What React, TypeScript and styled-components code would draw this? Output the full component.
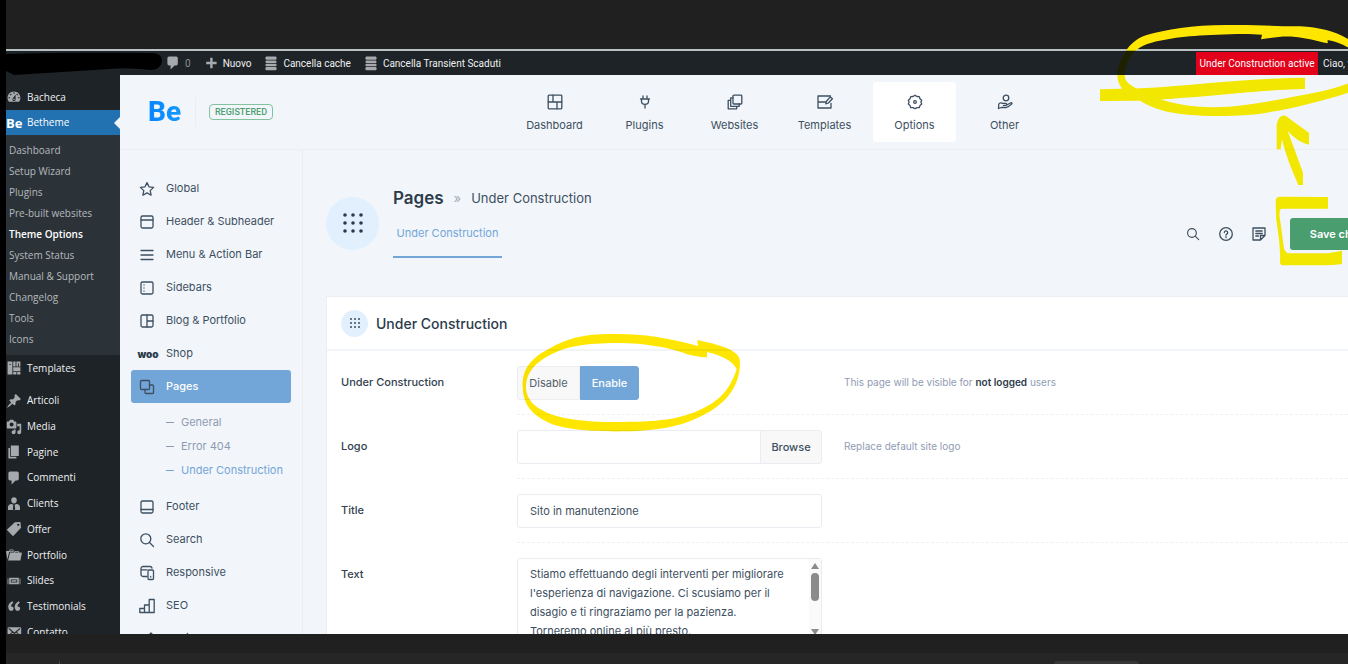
import React from "react";
import styled, { createGlobalStyle } from "styled-components";

const GlobalStyle = createGlobalStyle`
  *, *::before, *::after { box-sizing: border-box; }
  html, body { margin: 0; height: 100%; background: #202020; }
  #root { height: 100%; }
  a { color: inherit; text-decoration: none; }
  h1, h2, p, ul { margin: 0; padding: 0; font-weight: inherit; font-size: inherit; }
  ul { list-style: none; }
`;

const wpFont = `"Open Sans", "Noto Sans", sans-serif`;
const barFont = `Roboto, "Open Sans", sans-serif`;
const themeFont = `Inter, "Open Sans", sans-serif`;
const ink = "#3d4f61";
const accent = "#72a5d8";

/* ---------- page frame ---------- */

const Screen = styled.div`
  position: relative;
  display: flex;
  flex-direction: column;
  height: 100vh;
  overflow: hidden;
  border-left: 6px solid #000;
  background: #202020;
`;

const TopStrip = styled.div`
  flex: 0 0 51px;
  border-bottom: 2px solid #b7c0c2;
`;

const BottomStrip = styled.div`
  flex: 0 0 30px;
  display: flex;
  flex-direction: column;
  justify-content: flex-end;
`;

const TaskStrip = styled.div`
  height: 11px;
  display: flex;
  align-items: flex-end;
  padding: 0 209px 0 53px;
  background: #262626;
`;

const TaskDivider = styled.span`
  width: 1px;
  height: 3px;
  background: #444;
`;

const TaskTab = styled.span`
  width: 85px;
  height: 3px;
  margin-left: auto;
  border-radius: 3px 3px 0 0;
  background: #363636;
`;

/* ---------- admin bar ---------- */

const AdminBar = styled.header`
  flex: 0 0 24px;
  display: flex;
  align-items: center;
  background: #1d2327;
  border-bottom: 1px solid #45494c;
  color: #f0f0f1;
  font: 10px/23px ${barFont};
  white-space: nowrap;
`;

const SiteName = styled.svg`
  flex: none;
  width: 158px;
  height: 24px;
  margin-right: 1px;
`;

const BarLink = styled.a<{ $muted?: boolean }>`
  display: flex;
  align-items: center;
  gap: 4px;
  margin-right: 12px;
  color: ${(p) => (p.$muted ? "#8c8f94" : "#f0f0f1")};
`;

const StatusFlag = styled.a`
  margin-left: auto;
  width: 122px;
  text-align: center;
  background: #e2001a;
  color: #fff;
`;

const Greeting = styled.span`
  width: 30px;
  padding-left: 5px;
  overflow: hidden;
`;

/* ---------- WordPress menu ---------- */

const Body = styled.div`
  flex: 1;
  min-height: 0;
  display: flex;
  overflow: hidden;
  margin-top: -1px;
`;

const AdminMenu = styled.nav`
  flex: 0 0 114px;
  padding-top: 9px;
  background: #1d2327;
  color: #f0f0f1;
  font: 10px/15px ${wpFont};
  white-space: nowrap;
`;

const MenuLink = styled.a<{ $active?: boolean }>`
  position: relative;
  display: flex;
  align-items: center;
  gap: 5px;
  height: ${(p) => (p.$active ? "25px" : "26px")};
  background: ${(p) => (p.$active ? "#2271b1" : "transparent")};
  color: ${(p) => (p.$active ? "#fff" : "#f0f0f1")};
`;

const MenuArrow = styled.span`
  position: absolute;
  right: 0;
  top: 7px;
  border: 6px solid transparent;
  border-left-width: 0;
  border-right-color: #f2f6fa;
`;

const MiniLogo = styled.span`
  width: 16px;
  font: 700 13px/16px ${wpFont};
  color: #fff;
`;

const SubMenu = styled.ul`
  padding: 5px 0 5px 3px;
  background: #2c3338;
`;

const SubMenuItem = styled.li<{ $active?: boolean }>`
  line-height: 21px;
  color: ${(p) => (p.$active ? "#fff" : "#b4b9be")};
  font-weight: ${(p) => (p.$active ? 600 : 400)};
`;

const MenuGroup = styled.div`
  margin-top: 7px;
  height: 257px;
  display: grid;
  grid-auto-rows: 1fr;

  ${MenuLink} { height: auto; }
`;

/* ---------- theme area ---------- */

const Theme = styled.div`
  flex: 1;
  min-width: 0;
  display: flex;
  flex-direction: column;
  background: #f2f6fa;
  color: ${ink};
  font: 11px/17px ${themeFont};
`;

const ThemeHeader = styled.header`
  flex: 0 0 75px;
  display: flex;
  align-items: center;
  border-bottom: 1px solid #ebeff4;
`;

const Brand = styled.div`
  flex: 0 0 393px;
  display: flex;
  align-items: center;
  padding-left: 28px;
`;

const Logo = styled.span`
  width: 48px;
  border-right: 1px solid #eaeef3;
  font: 800 28px/30px Roboto, sans-serif;
  background: linear-gradient(90deg, #0a84ff, #18a4fb);
  background-clip: text;
  -webkit-background-clip: text;
  color: transparent;
`;

const Badge = styled.span`
  margin-left: 13px;
  width: 64px;
  border: 1px solid #83c29f;
  border-radius: 4px;
  text-align: center;
  color: #4d9f70;
  font: 500 9px/14px Roboto, sans-serif;
`;

const TopNav = styled.nav`
  display: flex;
  gap: 7px;
`;

const TopLink = styled.a<{ $active?: boolean }>`
  width: 83px;
  height: 60px;
  display: flex;
  flex-direction: column;
  align-items: center;
  justify-content: center;
  gap: 7px;
  padding-top: 3px;
  border-radius: 3px;
  background: ${(p) => (p.$active ? "#fff" : "transparent")};
`;

const ThemeBody = styled.div`
  flex: 1;
  min-height: 0;
  display: flex;
`;

const SideNav = styled.nav`
  flex: 0 0 183px;
  padding: 22px 11px 0;
  border-right: 1px solid #e9eef3;
  overflow: hidden;
`;

const SideLink = styled.a<{ $active?: boolean }>`
  display: flex;
  align-items: center;
  gap: 11px;
  height: 33px;
  padding-left: 8px;
  border-radius: 3px;
  background: ${(p) => (p.$active ? accent : "transparent")};
  font-weight: ${(p) => (p.$active ? 500 : 400)};

  span { color: ${(p) => (p.$active ? "#fff" : "inherit")}; }
`;

const SideSub = styled.ul`
  padding: 7px 0 8px 35px;
  line-height: 24px;
`;

const SideSubItem = styled.li<{ $active?: boolean }>`
  display: flex;
  align-items: center;
  gap: 7px;
  color: ${(p) => (p.$active ? accent : "#8f9bb3")};
  white-space: nowrap;

  &::before {
    content: "";
    width: 8px;
    height: 1px;
    background: currentColor;
  }
`;

const WooMark = styled.b`
  width: 24px;
  margin: 0 -5px 0 -3px;
  font: 900 10px/12px Inter, sans-serif;
  text-align: center;
  color: #2c3b4a;
`;

const Main = styled.main`
  flex: 1;
  min-width: 0;
  padding-left: 23px;
  overflow: hidden;
`;

const PageHead = styled.div`
  display: flex;
  align-items: center;
  height: 146px;
`;

const RoundIcon = styled.span<{ $size: number }>`
  flex: none;
  display: grid;
  place-items: center;
  width: ${(p) => p.$size}px;
  height: ${(p) => p.$size}px;
  border-radius: 50%;
  background: #e2f0fe;
  color: #2c3b4a;
`;

const HeadText = styled.div`
  display: flex;
  flex-direction: column;
  align-items: flex-start;
  gap: 16px;
  margin-left: 14px;
`;

const Crumbs = styled.div`
  display: flex;
  align-items: center;
  gap: 10px;
  font-size: 13px;
  line-height: 20px;

  h1 {
    font-size: 17px;
    font-weight: 600;
    color: #2c3b4a;
  }
  i {
    font-style: normal;
    color: #a3adb8;
  }
`;

const Tab = styled.a`
  width: 109px;
  padding-bottom: 14px;
  border-bottom: 2px solid ${accent};
  text-align: center;
  line-height: 18px;
  color: ${accent};
`;

const Tools = styled.div`
  display: flex;
  align-items: center;
  gap: 17px;
  margin: 21px -56px 0 auto;
`;

const IconButton = styled.button`
  display: grid;
  width: 16px;
  height: 16px;
  place-items: center;
  padding: 0;
  border: 0;
  background: none;
  color: ${ink};
`;

const SaveButton = styled.button`
  width: 114px;
  height: 32px;
  margin-left: 6px;
  padding: 0;
  border: 0;
  border-radius: 3px;
  background: #4a9d6e;
  color: #fff;
  font: 600 11px/16px ${themeFont};
`;

const Panel = styled.section`
  border: 1px solid #ebeff4;
  border-right: 0;
  background: #fff;
`;

const PanelHead = styled.h2`
  display: flex;
  align-items: center;
  gap: 8px;
  height: 54px;
  padding-left: 14px;
  border-bottom: 2px solid #f1f4f8;
  font-size: 14px;
  font-weight: 500;
  color: #2c3b4a;
`;

const FormRow = styled.div`
  display: flex;
  padding-left: 14px;
`;

const RowLabel = styled.label`
  flex: 0 0 176px;
  padding-top: 15px;
  line-height: 32px;
  font-weight: 500;
  color: #33424f;
`;

const RowContent = styled.div`
  flex: 1;
  display: flex;
  gap: 22px;
  padding: 15px 0 14px;
  border-bottom: 1px dashed #eef1f5;
`;

const Control = styled.div`
  position: relative;
  flex: 0 0 305px;
  display: flex;
  align-items: flex-start;
`;

const Hint = styled.p`
  font-size: 10px;
  line-height: 32px;
  color: #8f9bb3;

  b {
    font-weight: 600;
    color: #2c3b4a;
  }
`;

const SwitchButton = styled.button<{ $on?: boolean }>`
  height: 34px;
  width: ${(p) => (p.$on ? "59px" : "63px")};
  padding: 0;
  border: 1px solid ${(p) => (p.$on ? accent : "#ecedf1")};
  border-radius: ${(p) => (p.$on ? "0 3px 3px 0" : "3px 0 0 3px")};
  background: ${(p) => (p.$on ? accent : "#f8f8f9")};
  color: ${(p) => (p.$on ? "#fff" : "#55606c")};
  font: ${(p) => (p.$on ? 500 : 400)} 11px/16px ${themeFont};
`;

const TextInput = styled.input<{ $joined?: boolean }>`
  flex: 1;
  min-width: 0;
  height: 34px;
  padding: 0 12px;
  border: 1px solid #e9edf2;
  border-radius: ${(p) => (p.$joined ? "3px 0 0 3px" : "3px")};
  background: #fff;
  color: ${ink};
  font: 11px/16px ${themeFont};
`;

const BrowseButton = styled.button`
  width: 62px;
  height: 34px;
  margin-left: -1px;
  padding: 0;
  border: 1px solid #e9edf2;
  border-radius: 0 3px 3px 0;
  background: #f8f8f9;
  color: ${ink};
  font: 500 11px/16px ${themeFont};
`;

const TextArea = styled.textarea`
  flex: 1;
  min-width: 0;
  height: 82px;
  padding: 6px 24px 6px 12px;
  border: 1px solid #e9edf2;
  border-radius: 3px;
  resize: none;
  overflow-y: scroll;
  scrollbar-width: none;
  color: ${ink};
  font: 11px/19px ${themeFont};
`;

const ScrollBar = styled.svg`
  position: absolute;
  top: 1px;
  right: 1px;
  width: 12px;
  height: 80px;
`;

/* ---------- highlighter marks ---------- */

const Marks = styled.svg<{ $multiply?: boolean }>`
  position: absolute;
  inset: 0 auto auto -6px;
  pointer-events: none;
  mix-blend-mode: ${(p) => (p.$multiply ? "multiply" : "normal")};
`;

const ovalTop =
  "M810 121 C770 95 720 82 660 79 C600 80 540 74 450 75 C340 74 260 88 200 105 C160 118 140 145 128 170 C108 205 106 240 126 266 L180 302 C200 315 225 325 250 332 C320 352 480 352 560 338 C640 325 740 300 810 276 L810 248 C740 275 700 278 640 290 C560 306 480 322 400 322 C330 322 280 310 240 298 C200 285 165 265 145 250 C125 230 135 200 150 170 C165 150 185 135 215 128 C280 112 340 106 450 103 C490 101 520 102 546 104 L543 118 C570 114 600 108 640 110 C680 114 710 122 743 130 L743 120 C770 125 790 133 810 146 Z";
const underline =
  "M60 268 L60 303 L180 302 C380 292 520 270 675 267 L675 233 C480 236 330 258 180 265 Z";
const arrow =
  "M590 448 L590 375 Q595 344 617 347 Q640 365 687 398 L687 434 Q650 425 623 392 L669 518 L669 555 L655 555 C640 520 618 470 606 418 L602 448 Z";
const bracket =
  "M587 600 Q590 590 600 590 L744 591 L744 626 L604 626 Q597 628 599 650 L612 745 Q615 760 630 760 L745 760 L786 752 L786 792 Q760 796 730 796 L610 796 Q600 796 600 785 C602 730 592 690 588 650 Z";
const ovalSwitch =
  "M1290 215 C1290 180 1230 165 1162 150 L1164 168 C1060 140 990 130 900 132 C820 132 770 145 720 175 C660 205 636 240 638 290 C640 350 670 375 720 400 C780 425 900 426 980 423 C1060 420 1130 405 1190 370 C1260 330 1290 280 1290 215 Z M1280 238 C1262 290 1240 325 1180 355 C1110 390 1040 396 920 396 C820 396 740 385 700 362 C665 345 646 320 648 285 C650 245 680 215 720 195 C770 168 830 160 920 159 C1000 158 1070 172 1120 188 C1145 198 1165 200 1191 202 L1191 186 C1240 198 1270 215 1280 238 Z";

/* ---------- icons ---------- */

const dash: Record<string, string> = {
  dashboard:
    "M3.76 16h12.48c1.1-1.37 1.76-3.11 1.76-5 0-4.42-3.58-8-8-8s-8 3.58-8 8c0 1.89.66 3.63 1.76 5zM10 4c.55 0 1 .45 1 1s-.45 1-1 1-1-.45-1-1 .45-1 1-1zM6 6c.55 0 1 .45 1 1s-.45 1-1 1-1-.45-1-1 .45-1 1-1zm8 0c.55 0 1 .45 1 1s-.45 1-1 1-1-.45-1-1 .45-1 1-1zm-5.37 5.55L12 7v6c0 1.1-.9 2-2 2s-2-.9-2-2c0-.57.24-1.08.63-1.45zM4 10c.55 0 1 .45 1 1s-.45 1-1 1-1-.45-1-1 .45-1 1-1zm12 0c.55 0 1 .45 1 1s-.45 1-1 1-1-.45-1-1 .45-1 1-1zm-5 3c0-.55-.45-1-1-1s-1 .45-1 1 .45 1 1 1 1-.45 1-1z",
  templates: "M2 2h6v16H2zM9 2h3v6H9zM13 2h5v6h-2V4h-1v4h-2zM9 9h9v5h-9zM9 15h4v3H9zM14 15h4v3h-4zM4 5v1h2V5z",
  pin: "M10.44 3.02l1.82-1.82 6.36 6.35-1.83 1.82c-1.05-.68-2.48-.57-3.41.36l-.75.75c-.92.93-1.04 2.35-.35 3.41l-1.83 1.82-2.41-2.41-2.8 2.79c-.42.42-3.38 2.71-3.8 2.29s1.86-3.39 2.28-3.81l2.79-2.79L4.1 9.36l1.83-1.82c1.05.69 2.48.57 3.4-.36l.75-.75c.93-.92 1.05-2.35.36-3.41z",
  media:
    "M13 11V4c0-.55-.45-1-1-1h-1.67L9 1H5L3.67 3H2c-.55 0-1 .45-1 1v7c0 .55.45 1 1 1h10c.55 0 1-.45 1-1zM7 4.5c1.38 0 2.5 1.12 2.5 2.5S8.38 9.5 7 9.5 4.5 8.38 4.5 7 5.62 4.5 7 4.5zM14 6h5v10.5c0 1.38-1.12 2.5-2.5 2.5S14 17.88 14 16.5s1.12-2.5 2.5-2.5c.17 0 .34.02.5.05V9h-3V6zm-4 8.05V13h2v3.5c0 1.38-1.12 2.5-2.5 2.5S7 17.88 7 16.5 8.12 14 9.5 14c.17 0 .34.02.5.05z",
  page: "M6 15V2h10v13H6zm-1 1h8v2H3V5h2v11z",
  comment:
    "M5 2h9q.82 0 1.41.59T16 4v7q0 .82-.59 1.41T14 13h-2l-5 5v-5H5q-.82 0-1.41-.59T3 11V4q0-.82.59-1.41T5 2z",
  person:
    "M10 1.5c2.1 0 3.5 1.6 3.5 3.8S12.100 9.500 10 9.500 6.500 7.500 6.500 5.300 7.900 1.500 10 1.500zM7 10l2.200 1-.7 5.500L10 18l1.500-1.500-.7-5.500L13 10c2.800.4 4.500 1.500 4.500 4v3.500h-15V14c0-2.500 1.700-3.600 4.500-4z",
  tag: "M11 1.500L18 1.200 18.800 8.500 8.800 19 1 10.800zM15.300 3.300a1.400 1.400 0 1 0 .1 2.800 1.400 1.400 0 0 0-.1-2.800z",
  portfolio:
    "M4 5H.78c-.37 0-.74.32-.69.84l1.56 9.99S3.5 8.47 3.86 6.7c.11-.53.61-.7.98-.7H10s-.7-2.08-.77-2.31C9.11 3.25 8.89 3 8.45 3H5.14c-.36 0-.7.23-.8.64C4.25 4.04 4 5 4 5zm4.88 0h-4s.42-1 .87-1h2.13c.48 0 1 1 1 1zM2.67 16.25c-.31.47-.76.75-1.26.75h15.73c.54 0 .92-.31 1.03-.83.44-2.19 1.68-8.44 1.68-8.44.07-.5-.3-.73-.62-.73H16V5.53c0-.16-.26-.53-.66-.53h-3.76c-.52 0-.87.58-.87.58L10 7H5.59c-.32 0-.63.19-.69.5 0 0-1.59 6.7-1.72 7.33-.07.37-.22.99-.51 1.42zM15.38 7H11s.58-1 1.13-1h2.29c.71 0 .96 1 .96 1z",
  slides: "M2 7h1v7H2zM4 6h12v8H4zM17 7h1v7h-1zM6 8v4h8V8zM7 9h6v2H7z",
  quote:
    "M9.49 13.22c0-.74-.2-1.38-.61-1.9-.62-.78-1.83-.88-2.53-.72-.29-1.65 1.11-3.75 2.92-4.65L7.88 4c-2.73 1.3-5.42 4.28-4.96 8.05C3.21 14.43 4.59 16 6.54 16c.85 0 1.56-.25 2.12-.75s.83-1.18.83-2.03zm8.05 0c0-.74-.2-1.38-.61-1.9-.63-.78-1.83-.88-2.53-.72-.29-1.65 1.11-3.75 2.92-4.65L15.93 4c-2.73 1.3-5.41 4.28-4.95 8.05.29 2.38 1.66 3.95 3.61 3.95.85 0 1.56-.25 2.12-.75s.83-1.18.83-2.03z",
  mail: "M19 14.5v-9c0-.83-.67-1.5-1.5-1.5H3.49c-.83 0-1.5.67-1.5 1.5v9c0 .83.67 1.5 1.5 1.5H17.5c.83 0 1.5-.67 1.5-1.5zm-1.31-9.11c.33.33.15.67-.03.84L13.6 9.95l3.9 4.06c.12.14.2.36.06.51-.13.16-.43.15-.56.05l-4.37-3.73-2.14 1.95-2.13-1.95-4.37 3.73c-.13.1-.43.11-.56-.05-.14-.15-.06-.37.06-.51l3.9-4.06-4.06-3.72c-.18-.17-.36-.51-.03-.84s.67-.17.95.07l6.24 5.04 6.25-5.04c.28-.24.62-.4.95-.07z",
  plus: "M17 8.500v3h-5v5H9v-5H4v-3h5v-5h3v5z",
  stack:
    "M4 2h12l1 1v2l-1 1H4L3 5V3zM4 7h12l1 1v1l-1 1H4L3 9V8zM4 11h12l1 1v1l-1 1H4l-1-1v-1zM4 15h12l1 1v2l-1 1H4l-1-1v-2z",
};

const DashIcon = ({ name }: { name: string }) => (
  <svg width="16" height="16" viewBox="0 0 20 20" fill="#a7aaad" fillRule="evenodd" aria-hidden="true">
    <path d={dash[name]} />
  </svg>
);

const line: Record<string, React.ReactNode> = {
  star: <path d="M8 1.600l2 4.200 4.600.6-3.400 3.200.9 4.600L8 11.900l-4.100 2.300.9-4.600L1.400 6.400 6 5.800z" />,
  header: <><rect x="2" y="2" width="12" height="12" rx="1.500" /><path d="M2 6h12" /></>,
  menu: <path d="M2 3.500h12M2 8h12M2 12.500h12" />,
  sidebars: <><rect x="2" y="2" width="12" height="12" rx="1.500" /><path d="M5 5v.1M5 8v.1M5 11v.1" /></>,
  blog: <><rect x="2" y="2" width="12" height="12" rx="1.500" /><path d="M8 2v12M8 8h6" /></>,
  pages: <><rect x="1.500" y="1.500" width="9" height="9" rx="1" /><path d="M10.500 6H13.500a1 1 0 0 1 1 1v6.500a1 1 0 0 1-1 1H7a1 1 0 0 1-1-1V10.500" /></>,
  footer: <><rect x="2" y="2" width="12" height="12" rx="1.500" /><path d="M2 10.500h12" /></>,
  search: <><circle cx="6.800" cy="6.800" r="5" /><path d="M10.500 10.500l4 4" /></>,
  responsive: <><path d="M8 11.500H4a2 2 0 0 1-2-2V3.500a2 2 0 0 1 2-2h7a2 2 0 0 1 2 1.500M2 4.800h6" /><rect x="9" y="5" width="5.500" height="9.500" rx="1" /><path d="M11.700 11.500v.6" /></>,
  seo: <path d="M.8 14.500v-4h4.700v4zM5.500 14.500V7h4.700v7.500zM10.200 14.500V1.500h5v13zM.8 14.500h14.400" />,
  tool: <path d="M9 5l3-3 2 2-3 3zM9 5l-6 6v3h3l5-7" fill="currentColor" />,
  dashboardNav: <><rect x="1.200" y="1.200" width="13.600" height="13.600" rx=".8" /><path d="M1.200 8h13.600M6 1.200V8M10 8v6.800" /></>,
  plug: <path d="M6 2v2.500M10 2v2.500M3.500 5h9M4.500 5v2.500a3.500 2.800 0 0 0 7 0V5M8 10.300v3.700" />,
  websites: <><rect x="6" y="1.200" width="8.800" height="8.800" rx=".8" /><path d="M6 3.800H3.700v8.500h8.500V10M3.700 6.300H1.200v8.500h8.500v-2.500" /></>,
  templatesNav: <><path d="M14 9.500v4.500H1V2h12.500M1 8h7.500" /><path d="M8.800 9.800l.6-2.600 4-4.300 2 1.800-4 4.300z" /></>,
  options: <><path d="M8 1.200l1.900 1.300 2.400.1.700 2.200 1.700 1.400-.8 1.800.8 2-1.700 1.400-.8 2.300-2.300-.1L8 14.800l-1.900-1.200-2.300.1-.8-2.300L1.300 10l.8-2-.8-1.800L3 4.800l.7-2.200 2.400-.1z" /><circle cx="8" cy="8" r="1.300" /></>,
  other: <><circle cx="9" cy="4" r="2.800" /><path d="M1.500 14.500l.3-4.500c1-1.500 3-1.500 4-.6h3c1.300 0 1.300 2 0 2H6.500M9.800 11l4-2.200c1-.4 1.600.6.8 1.300-2 1.800-4 3.400-5.600 3.400H4.200l-2.700 1" /></>,
  help: <><circle cx="8" cy="8" r="6.300" /><path d="M6.300 6.500a1.700 1.700 0 1 1 2.400 1.600c-.5.3-.7.500-.7 1.100M8 10.700v1" /></>,
  note: <><path d="M14 9.500V2H2v12h7.500zM14 9.500H9.500V14M4.800 5h6.400M4.800 7.500h6.400M4.800 10h2.700" /></>,
};

const LineIcon = ({ name, size = 16 }: { name: string; size?: number }) => (
  <svg
    width={size}
    height={size}
    viewBox="0 0 16 16"
    fill="none"
    stroke="currentColor"
    strokeWidth="1.3"
    strokeLinecap="round"
    strokeLinejoin="round"
    aria-hidden="true"
  >
    {line[name]}
  </svg>
);

const Dots = ({ size }: { size: number }) => (
  <svg width={size} height={size} viewBox="0 0 20 20" fill="currentColor" aria-hidden="true">
    {[2, 10, 18].map((y) => [2, 10, 18].map((x) => <circle key={`${x}-${y}`} cx={x} cy={y} r="1.8" />))}
  </svg>
);

/* ---------- content ---------- */

const submenu = [
  "Dashboard", "Setup Wizard", "Plugins", "Pre-built websites", "Theme Options",
  "System Status", "Manual & Support", "Changelog", "Tools", "Icons",
];

const adminItems = [
  ["pin", "Articoli"], ["media", "Media"], ["page", "Pagine"], ["comment", "Commenti"],
  ["person", "Clients"], ["tag", "Offer"], ["portfolio", "Portfolio"], ["slides", "Slides"],
  ["quote", "Testimonials"], ["mail", "Contatto"],
];

const topItems = [
  ["dashboardNav", "Dashboard"], ["plug", "Plugins"], ["websites", "Websites"],
  ["templatesNav", "Templates"], ["options", "Options"], ["other", "Other"],
];

const sideTop = [
  ["star", "Global"], ["header", "Header & Subheader"], ["menu", "Menu & Action Bar"],
  ["sidebars", "Sidebars"], ["blog", "Blog & Portfolio"],
];

const sideBottom = [
  ["footer", "Footer"], ["search", "Search"], ["responsive", "Responsive"], ["seo", "SEO"], ["tool", "Social"],
];

const message =
  "Stiamo effettuando degli interventi per migliorare l'esperienza di navigazione. Ci scusiamo per il disagio e ti ringraziamo per la pazienza.\nTorneremo online al più presto.";

export default function App() {
  return (
    <Screen>
      <GlobalStyle />
      <TopStrip />
      <AdminBar>
        <SiteName viewBox="0 0 158 24" aria-hidden="true">
          <path d="M0 3Q60 1 148 2Q156 3 156 10Q155 19 144 19Q120 16 104 18L8 24L0 20Z" fill="#000" />
        </SiteName>
        <BarLink href="#comments" $muted><DashIcon name="comment" />0</BarLink>
        <BarLink href="#new"><DashIcon name="plus" />Nuovo</BarLink>
        <BarLink href="#cache"><DashIcon name="stack" />Cancella cache</BarLink>
        <BarLink href="#transient"><DashIcon name="stack" />Cancella Transient Scaduti</BarLink>
        <StatusFlag href="#status">Under Construction active</StatusFlag>
        <Greeting>Ciao, v</Greeting>
      </AdminBar>

      <Body>
        <AdminMenu>
          <MenuLink href="#bacheca"><DashIcon name="dashboard" />Bacheca</MenuLink>
          <MenuLink href="#betheme" $active><MiniLogo>Be</MiniLogo>Betheme<MenuArrow /></MenuLink>
          <SubMenu>
            {submenu.map((t) => (
              <SubMenuItem key={t} $active={t === "Theme Options"}><a href="#sub">{t}</a></SubMenuItem>
            ))}
          </SubMenu>
          <MenuLink href="#templates"><DashIcon name="templates" />Templates</MenuLink>
          <MenuGroup>
            {adminItems.map(([icon, t]) => (
              <MenuLink key={t} href="#item"><DashIcon name={icon} />{t}</MenuLink>
            ))}
          </MenuGroup>
        </AdminMenu>

        <Theme>
          <ThemeHeader>
            <Brand><Logo>Be</Logo><Badge>REGISTERED</Badge></Brand>
            <TopNav>
              {topItems.map(([icon, t]) => (
                <TopLink key={t} href="#top" $active={t === "Options"}>
                  <LineIcon name={icon} />{t}
                </TopLink>
              ))}
            </TopNav>
          </ThemeHeader>

          <ThemeBody>
            <SideNav>
              {sideTop.map(([icon, t]) => (
                <SideLink key={t} href="#side"><LineIcon name={icon} /><span>{t}</span></SideLink>
              ))}
              <SideLink href="#shop"><WooMark>woo</WooMark><span>Shop</span></SideLink>
              <SideLink href="#pages" $active><LineIcon name="pages" /><span>Pages</span></SideLink>
              <SideSub>
                <SideSubItem><a href="#general">General</a></SideSubItem>
                <SideSubItem><a href="#404">Error 404</a></SideSubItem>
                <SideSubItem $active><a href="#under">Under Construction</a></SideSubItem>
              </SideSub>
              {sideBottom.map(([icon, t]) => (
                <SideLink key={t} href="#side"><LineIcon name={icon} /><span>{t}</span></SideLink>
              ))}
            </SideNav>

            <Main>
              <PageHead>
                <RoundIcon $size={53}><Dots size={20} /></RoundIcon>
                <HeadText>
                  <Crumbs><h1>Pages</h1><i>»</i><span>Under Construction</span></Crumbs>
                  <Tab href="#tab">Under Construction</Tab>
                </HeadText>
                <Tools>
                  <IconButton aria-label="Search"><LineIcon name="search" size={14} /></IconButton>
                  <IconButton aria-label="Help"><LineIcon name="help" /></IconButton>
                  <IconButton aria-label="Notes"><LineIcon name="note" /></IconButton>
                  <SaveButton>Save changes</SaveButton>
                </Tools>
              </PageHead>

              <Panel>
                <PanelHead><RoundIcon $size={27}><Dots size={10} /></RoundIcon>Under Construction</PanelHead>
                <FormRow>
                  <RowLabel htmlFor="enable">Under Construction</RowLabel>
                  <RowContent>
                    <Control>
                      <SwitchButton>Disable</SwitchButton>
                      <SwitchButton id="enable" $on>Enable</SwitchButton>
                    </Control>
                    <Hint>This page will be visible for <b>not logged</b> users</Hint>
                  </RowContent>
                </FormRow>
                <FormRow>
                  <RowLabel htmlFor="logo">Logo</RowLabel>
                  <RowContent>
                    <Control>
                      <TextInput id="logo" $joined />
                      <BrowseButton>Browse</BrowseButton>
                    </Control>
                    <Hint>Replace default site logo</Hint>
                  </RowContent>
                </FormRow>
                <FormRow>
                  <RowLabel htmlFor="title">Title</RowLabel>
                  <RowContent>
                    <Control><TextInput id="title" defaultValue="Sito in manutenzione" /></Control>
                  </RowContent>
                </FormRow>
                <FormRow>
                  <RowLabel htmlFor="text">Text</RowLabel>
                  <RowContent>
                    <Control>
                      <TextArea id="text" defaultValue={message} />
                      <ScrollBar viewBox="0 0 12 80" fill="#8b8b8b" aria-hidden="true">
                        <rect width="12" height="80" fill="#fafafa" />
                        <path d="M6 4l4 6H2zM6 76l4-6H2z" />
                        <rect x="2" y="14" width="8" height="28" rx="4" />
                      </ScrollBar>
                    </Control>
                  </RowContent>
                </FormRow>
              </Panel>
            </Main>
          </ThemeBody>
        </Theme>
      </Body>

      <BottomStrip>
        <TaskStrip><TaskDivider /><TaskTab /></TaskStrip>
      </BottomStrip>

      <Marks width="1348" height="50" viewBox="0 0 1348 50" fill="#ffe600" aria-hidden="true">
        <path transform="translate(1080 0) scale(0.33333)" d={ovalTop} />
      </Marks>
      <Marks $multiply width="1348" height="634" viewBox="0 0 1348 634" fill="#ffe600" aria-hidden="true">
        <g transform="translate(1080 0) scale(0.33333)" fill="#fff000">
          <g clipPath="url(#below)">
            <path d={`${ovalTop} ${underline}`} />
          </g>
          <path d={`${arrow} ${bracket}`} />
        </g>
        <path transform="translate(310 290) scale(0.33333)" fillRule="evenodd" d={ovalSwitch} />
        <clipPath id="below"><rect x="0" y="150" width="900" height="400" /></clipPath>
      </Marks>
    </Screen>
  );
}
